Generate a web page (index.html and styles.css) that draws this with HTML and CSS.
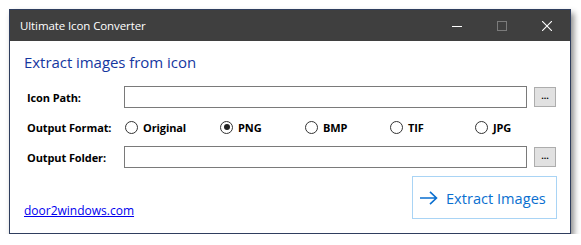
FILE: index.html
```html
<!DOCTYPE html>
<html>
<head>
<meta charset="utf-8">
<link rel="stylesheet" href="styles.css">
</head>
<body>
<div class="window">
  <div class="titlebar">
    <span class="title">Ultimate Icon Converter</span>
    <div class="controls">
      <span class="ctl min"><svg width="10" height="10" viewBox="0 0 10 10"><line x1="0" y1="5.5" x2="10" y2="5.5" stroke="#fff" stroke-width="1"/></svg></span>
      <span class="ctl max"><svg width="10" height="10" viewBox="0 0 10 10"><rect x="0.5" y="0.5" width="9" height="9" fill="none" stroke="#7b7b7b" stroke-width="1"/></svg></span>
      <span class="ctl close"><svg width="10" height="10" viewBox="0 0 10 10"><path d="M0 0 L10 10 M10 0 L0 10" stroke="#fff" stroke-width="1.1"/></svg></span>
    </div>
  </div>
  <div class="content">
    <h1 class="heading">Extract images from icon</h1>
    <div class="row">
      <label class="lbl">Icon Path:</label>
      <div class="textbox"></div>
      <button class="browse">...</button>
    </div>
    <div class="row radios-row">
      <label class="lbl">Output Format:</label>
      <div class="radios">
        <span class="radio first"><span class="circle"></span>Original</span>
        <span class="radio"><span class="circle checked"></span>PNG</span>
        <span class="radio"><span class="circle"></span>BMP</span>
        <span class="radio"><span class="circle"></span>TIF</span>
        <span class="radio"><span class="circle"></span>JPG</span>
      </div>
    </div>
    <div class="row">
      <label class="lbl">Output Folder:</label>
      <div class="textbox"></div>
      <button class="browse">...</button>
    </div>
    <div class="footer">
      <a class="link" href="#">door2windows.com</a>
      <button class="extract">
        <svg width="18" height="14" viewBox="0 0 18 14"><path d="M0 7 H16.5 M10 0.8 L16.5 7 L10 13.2" fill="none" stroke="#0a6fd0" stroke-width="1.6"/></svg>
        <span>Extract Images</span>
      </button>
    </div>
  </div>
</div>
</body>
</html>
```
FILE: styles.css
```css
* { box-sizing: border-box; }
html, body { margin: 0; padding: 0; background: #ffffff; }
body { font-family: "Open Sans", "Noto Sans", sans-serif; }

.window {
  margin: 9px 0 0 9px;
  width: 562px;
  height: 225px;
  border: 1px solid #2f3e5e;
  background: #ffffff;
  box-shadow: 3px 4px 6px rgba(0,0,0,0.45);
  display: flex;
  flex-direction: column;
}

.titlebar {
  height: 31px;
  background: #3f3f3f;
  display: flex;
  align-items: center;
  justify-content: space-between;
  padding-left: 10px;
  flex: none;
}
.title { color: #ffffff; font-size: 11.5px; letter-spacing: -0.1px; }
.controls { display: flex; height: 100%; }
.ctl { width: 45px; display: flex; align-items: center; justify-content: center; }
.ctl svg { display: block; }
.close { width: 46px; }

.content {
  flex: 1;
  padding: 0 13px 0 14px;
  display: flex;
  flex-direction: column;
}
.heading {
  margin: 0;
  padding-top: 11px;
  height: 45px;
  font-weight: normal;
  font-size: 15px;
  color: #15379f;
  letter-spacing: -0.05px;
}
.row {
  display: flex;
  align-items: center;
  height: 22px;
}
.row + .row { margin-top: 8px; }
.radios-row { height: 22px; }
.lbl {
  width: 100px;
  padding-left: 3px;
  font-size: 11px;
  font-weight: 700;
  color: #000;
  letter-spacing: -0.1px;
  flex: none;
}
.textbox {
  width: 403px;
  height: 22px;
  border: 1px solid #7a7a7a;
  background: #fff;
  flex: none;
}
.browse {
  margin-left: 7px;
  width: 22px;
  height: 20px;
  border: 1px solid #adadad;
  background: #e1e1e1;
  font-family: inherit;
  font-size: 9px;
  font-weight: 700;
  padding: 0 0 4px 0;
  line-height: 1;
  color: #000;
  flex: none;
}
.radios { display: flex; align-items: center; }
.radio {
  display: flex;
  align-items: center;
  width: 85px;
  font-size: 11px;
  font-weight: 700;
  color: #000;
  letter-spacing: -0.1px;
}
.radio.first { width: 95px; margin-left: 1px; }
.circle {
  width: 13px;
  height: 13px;
  border: 1px solid #333;
  border-radius: 50%;
  margin-right: 5px;
  position: relative;
  flex: none;
}
.circle.checked::after {
  content: "";
  position: absolute;
  left: 2.5px; top: 2.5px;
  width: 6px; height: 6px;
  border-radius: 50%;
  background: #222;
}
.footer {
  display: flex;
  justify-content: space-between;
  align-items: flex-end;
  margin-top: 8px;
}
.link {
  color: #0000ee;
  font-size: 12px;
  text-decoration: underline;
  margin-bottom: 0;
}
.extract {
  width: 145px;
  height: 43px;
  margin-right: 0;
  border: 1px solid #a9d4f5;
  background: #fff;
  display: flex;
  align-items: center;
  padding: 0 0 0 7px;
  font-family: inherit;
  color: #0a6fd0;
  font-size: 14.6px;
}
.extract svg { margin-right: 8px; flex: none; }
```
